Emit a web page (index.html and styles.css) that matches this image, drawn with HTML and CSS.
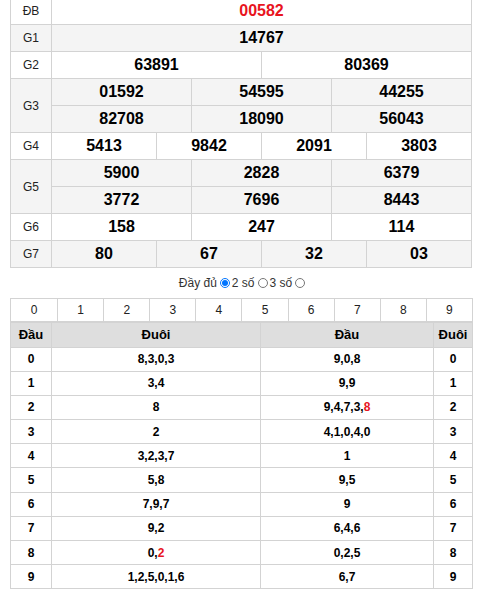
FILE: index.html
```html
<!DOCTYPE html>
<html lang="vi">
<head>
<meta charset="utf-8">
<link rel="stylesheet" href="styles.css">
</head>
<body>
<div class="page">
  <table class="kq">
    <colgroup>
      <col class="c-lbl">
      <col><col><col><col><col><col><col><col><col><col><col><col>
    </colgroup>
    <tr class="r-w"><td class="lbl">ĐB</td><td colspan="12" class="num red">00582</td></tr>
    <tr class="r-g"><td class="lbl">G1</td><td colspan="12" class="num">14767</td></tr>
    <tr class="r-w"><td class="lbl">G2</td><td colspan="6" class="num">63891</td><td colspan="6" class="num">80369</td></tr>
    <tr class="r-g"><td class="lbl" rowspan="2">G3</td><td colspan="4" class="num">01592</td><td colspan="4" class="num">54595</td><td colspan="4" class="num">44255</td></tr>
    <tr class="r-g"><td colspan="4" class="num">82708</td><td colspan="4" class="num">18090</td><td colspan="4" class="num">56043</td></tr>
    <tr class="r-w"><td class="lbl">G4</td><td colspan="3" class="num">5413</td><td colspan="3" class="num">9842</td><td colspan="3" class="num">2091</td><td colspan="3" class="num">3803</td></tr>
    <tr class="r-g"><td class="lbl" rowspan="2">G5</td><td colspan="4" class="num">5900</td><td colspan="4" class="num">2828</td><td colspan="4" class="num">6379</td></tr>
    <tr class="r-g"><td colspan="4" class="num">3772</td><td colspan="4" class="num">7696</td><td colspan="4" class="num">8443</td></tr>
    <tr class="r-w"><td class="lbl">G6</td><td colspan="4" class="num">158</td><td colspan="4" class="num">247</td><td colspan="4" class="num">114</td></tr>
    <tr class="r-g"><td class="lbl">G7</td><td colspan="3" class="num">80</td><td colspan="3" class="num">67</td><td colspan="3" class="num">32</td><td colspan="3" class="num">03</td></tr>
  </table>

  <div class="opts">
    <label class="opt">Đầy đủ<input type="radio" name="m" checked></label>
    <label class="opt">2 số<input type="radio" name="m"></label>
    <label class="opt">3 số<input type="radio" name="m"></label>
  </div>

  <table class="lt">
    <colgroup>
      <col class="d1"><col class="d2"><col class="d3"><col class="d4">
    </colgroup>
    <tr class="digits">
      <td colspan="4">
        <div class="dg">
          <span>0</span><span>1</span><span>2</span><span>3</span><span>4</span><span>5</span><span>6</span><span>7</span><span>8</span><span>9</span>
        </div>
      </td>
    </tr>
    <tr class="head"><td>Đầu</td><td>Đuôi</td><td>Đầu</td><td>Đuôi</td></tr>
    <tr><td>0</td><td>8,3,0,3</td><td>9,0,8</td><td>0</td></tr>
    <tr><td>1</td><td>3,4</td><td>9,9</td><td>1</td></tr>
    <tr><td>2</td><td>8</td><td>9,4,7,3,<span class="red">8</span></td><td>2</td></tr>
    <tr><td>3</td><td>2</td><td>4,1,0,4,0</td><td>3</td></tr>
    <tr><td>4</td><td>3,2,3,7</td><td>1</td><td>4</td></tr>
    <tr><td>5</td><td>5,8</td><td>9,5</td><td>5</td></tr>
    <tr><td>6</td><td>7,9,7</td><td>9</td><td>6</td></tr>
    <tr><td>7</td><td>9,2</td><td>6,4,6</td><td>7</td></tr>
    <tr><td>8</td><td>0,<span class="red">2</span></td><td>0,2,5</td><td>8</td></tr>
    <tr><td>9</td><td>1,2,5,0,1,6</td><td>6,7</td><td>9</td></tr>
  </table>
</div>
</body>
</html>
```

FILE: styles.css
```css
html, body {
  margin: 0;
  padding: 0;
  background: #fff;
}
body {
  font-family: "Liberation Sans", Arial, sans-serif;
  color: #000;
}
.page {
  width: 462px;
  margin: -3px 0 0 10px;
}
.kq {
  width: 462px;
  border-collapse: collapse;
  table-layout: fixed;
}
.kq .c-lbl { width: 41px; }
.kq td {
  border: 1px solid #d3d3d3;
  padding: 0;
  text-align: center;
  vertical-align: middle;
}
.kq tr { height: 27px; }
.r-g td { background: #f4f4f4; }
.r-w td { background: #fff; }
.lbl {
  font-size: 12px;
  color: #222;
}
.num {
  font-size: 16px;
  font-weight: bold;
}
.red { color: #e8141e; }

.opts {
  display: flex;
  justify-content: center;
  align-items: center;
  height: 30px;
  padding-left: 4px;
  font-size: 12px;
  color: #333;
}
.opt {
  display: flex;
  align-items: center;
}
.opt input {
  width: 10px;
  height: 10px;
  margin: 0 2px 0 3px;
}

.lt {
  width: 462px;
  border-collapse: collapse;
  table-layout: fixed;
}
.lt .d1 { width: 41px; }
.lt .d2 { width: 209px; }
.lt .d3 { width: 173px; }
.lt .d4 { width: 39px; }
.lt td {
  border: 1px solid #d3d3d3;
  padding: 0;
  text-align: center;
  vertical-align: middle;
  font-size: 12px;
  font-weight: bold;
}
.lt tr { height: 24.2px; }
.lt tr.digits { height: 23px; }
.lt tr.digits td { border-bottom: 2px solid #d3d3d3; }
.dg {
  display: grid;
  grid-template-columns: repeat(10, 1fr);
  height: 22px;
}
.dg span {
  display: flex;
  align-items: center;
  justify-content: center;
  font-weight: normal;
  color: #222;
  border-left: 1px solid #d3d3d3;
}
.dg span:first-child { border-left: none; }
.lt tr.head { height: 25px; }
.lt tr.head td {
  background: #dedede;
  font-size: 13px;
}
```
